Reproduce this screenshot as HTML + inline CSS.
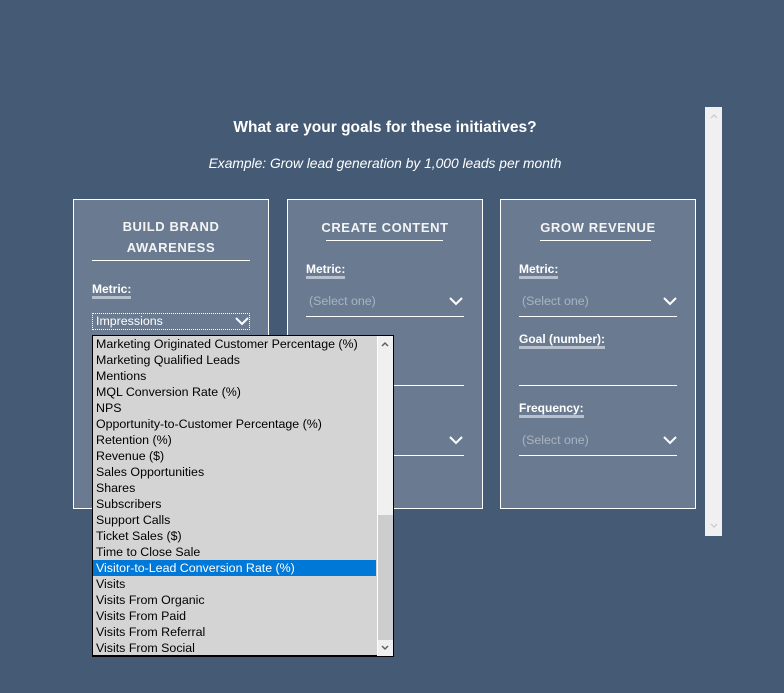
<!DOCTYPE html>
<html><head><style>
*{margin:0;padding:0;box-sizing:border-box}
body{width:784px;height:693px;background:#455a75;font-family:"Liberation Sans",sans-serif;position:relative;overflow:hidden;color:#fff}
.abs{position:absolute}
.card{position:absolute;top:199px;width:196px;height:310px;border:1px solid #fff;background:#6a7b91}
.title{position:absolute;text-align:center;font-size:13px;letter-spacing:.6px;line-height:21px;font-weight:bold;color:#f4f4f4}
.line{position:absolute;height:1px;background:#fff}
.lbl{position:absolute;font-size:12px;font-weight:bold;border-bottom:3px solid #b6bfcb;line-height:13px}
.sel{position:absolute;font-size:12.4px;color:#a9b4c2}
.chev{position:absolute;width:16px;height:10px}
.list{position:absolute;left:92px;top:335px;width:302px;height:322px;background:#d4d4d4;border:1px solid #000;border-right:2px solid #000;border-bottom:2px solid #000}
.it{height:16px;line-height:16px;font-size:12.4px;color:#000;padding-left:3px;width:283px;white-space:nowrap;overflow:hidden}
.hi{background:#0078d7;color:#fff}
</style></head><body>
<div class="abs" style="left:0;top:119px;width:770px;text-align:center;font-size:15.5px;font-weight:bold">What are your goals for these initiatives?</div>
<div class="abs" style="left:0;top:156px;width:770px;text-align:center;font-size:13.8px;font-style:italic">Example: Grow lead generation by 1,000 leads per month</div>

<div class="abs" style="left:705px;top:107px;width:17px;height:429px;background:#f0f0f0"></div>
<svg class="abs" style="left:709px;top:112px" width="10" height="8" viewBox="0 0 10 8"><path d="M2 6l3-3 3 3" stroke="#c8c8c8" stroke-width="1.2" fill="none"/></svg>
<svg class="abs" style="left:709px;top:522px" width="10" height="8" viewBox="0 0 10 8"><path d="M2 2l3 3 3-3" stroke="#c8c8c8" stroke-width="1.2" fill="none"/></svg>

<div class="card" style="left:73px"></div>
<div class="title" style="left:73px;top:216px;width:196px">BUILD BRAND<br>AWARENESS</div>
<div class="line" style="left:92px;top:260px;width:158px"></div>
<div class="lbl" style="left:92px;top:283px">Metric:</div>
<div class="abs" style="left:92px;top:313px;width:158px;height:17px;border:1px dotted #fff;font-size:12.4px;line-height:15px;padding-left:3px">Impressions</div>
<svg class="chev" style="left:234px;top:316px" viewBox="0 0 16 10"><path d="M2 2l6 6 6-6" stroke="#fff" stroke-width="2" fill="none"/></svg>

<div class="card" style="left:287px"></div>
<div class="title" style="left:287px;top:217px;width:196px">CREATE CONTENT</div>
<div class="line" style="left:326px;top:240px;width:117px"></div>
<div class="lbl" style="left:306px;top:263px">Metric:</div>
<div class="sel" style="left:309px;top:294px">(Select one)</div>
<svg class="chev" style="left:448px;top:296px" viewBox="0 0 16 10"><path d="M2 2l6 6 6-6" stroke="#fff" stroke-width="2" fill="none"/></svg>
<div class="line" style="left:306px;top:316px;width:158px"></div>
<div class="line" style="left:306px;top:385px;width:158px"></div>
<svg class="chev" style="left:448px;top:435px" viewBox="0 0 16 10"><path d="M2 2l6 6 6-6" stroke="#fff" stroke-width="2" fill="none"/></svg>
<div class="line" style="left:306px;top:455px;width:158px"></div>

<div class="card" style="left:500px"></div>
<div class="title" style="left:500px;top:217px;width:196px">GROW REVENUE</div>
<div class="line" style="left:540px;top:240px;width:111px"></div>
<div class="lbl" style="left:519px;top:263px">Metric:</div>
<div class="sel" style="left:522px;top:294px">(Select one)</div>
<svg class="chev" style="left:662px;top:296px" viewBox="0 0 16 10"><path d="M2 2l6 6 6-6" stroke="#fff" stroke-width="2" fill="none"/></svg>
<div class="line" style="left:519px;top:316px;width:158px"></div>
<div class="lbl" style="left:519px;top:333px">Goal (number):</div>
<div class="line" style="left:519px;top:385px;width:158px"></div>
<div class="lbl" style="left:519px;top:402px">Frequency:</div>
<div class="sel" style="left:522px;top:433px">(Select one)</div>
<svg class="chev" style="left:662px;top:435px" viewBox="0 0 16 10"><path d="M2 2l6 6 6-6" stroke="#fff" stroke-width="2" fill="none"/></svg>
<div class="line" style="left:519px;top:455px;width:158px"></div>

<div class="list">
<div class="it">Marketing Originated Customer Percentage (%)</div>
<div class="it">Marketing Qualified Leads</div>
<div class="it">Mentions</div>
<div class="it">MQL Conversion Rate (%)</div>
<div class="it">NPS</div>
<div class="it">Opportunity-to-Customer Percentage (%)</div>
<div class="it">Retention (%)</div>
<div class="it">Revenue ($)</div>
<div class="it">Sales Opportunities</div>
<div class="it">Shares</div>
<div class="it">Subscribers</div>
<div class="it">Support Calls</div>
<div class="it">Ticket Sales ($)</div>
<div class="it">Time to Close Sale</div>
<div class="it hi">Visitor-to-Lead Conversion Rate (%)</div>
<div class="it">Visits</div>
<div class="it">Visits From Organic</div>
<div class="it">Visits From Paid</div>
<div class="it">Visits From Referral</div>
<div class="it">Visits From Social</div>
<div class="abs" style="left:284px;top:0;width:16px;height:320px;background:#f0f0f0;border-left:1px solid #fff"></div>
<div class="abs" style="left:285px;top:179px;width:15px;height:125px;background:#cdcdcd"></div>
<svg class="abs" style="left:287px;top:4px" width="10" height="8" viewBox="0 0 10 8"><path d="M2 6l3-3 3 3" stroke="#606060" stroke-width="1.5" fill="none"/></svg>
<svg class="abs" style="left:287px;top:308px" width="10" height="8" viewBox="0 0 10 8"><path d="M2 2l3 3 3-3" stroke="#606060" stroke-width="1.5" fill="none"/></svg>
</div>
</body></html>
